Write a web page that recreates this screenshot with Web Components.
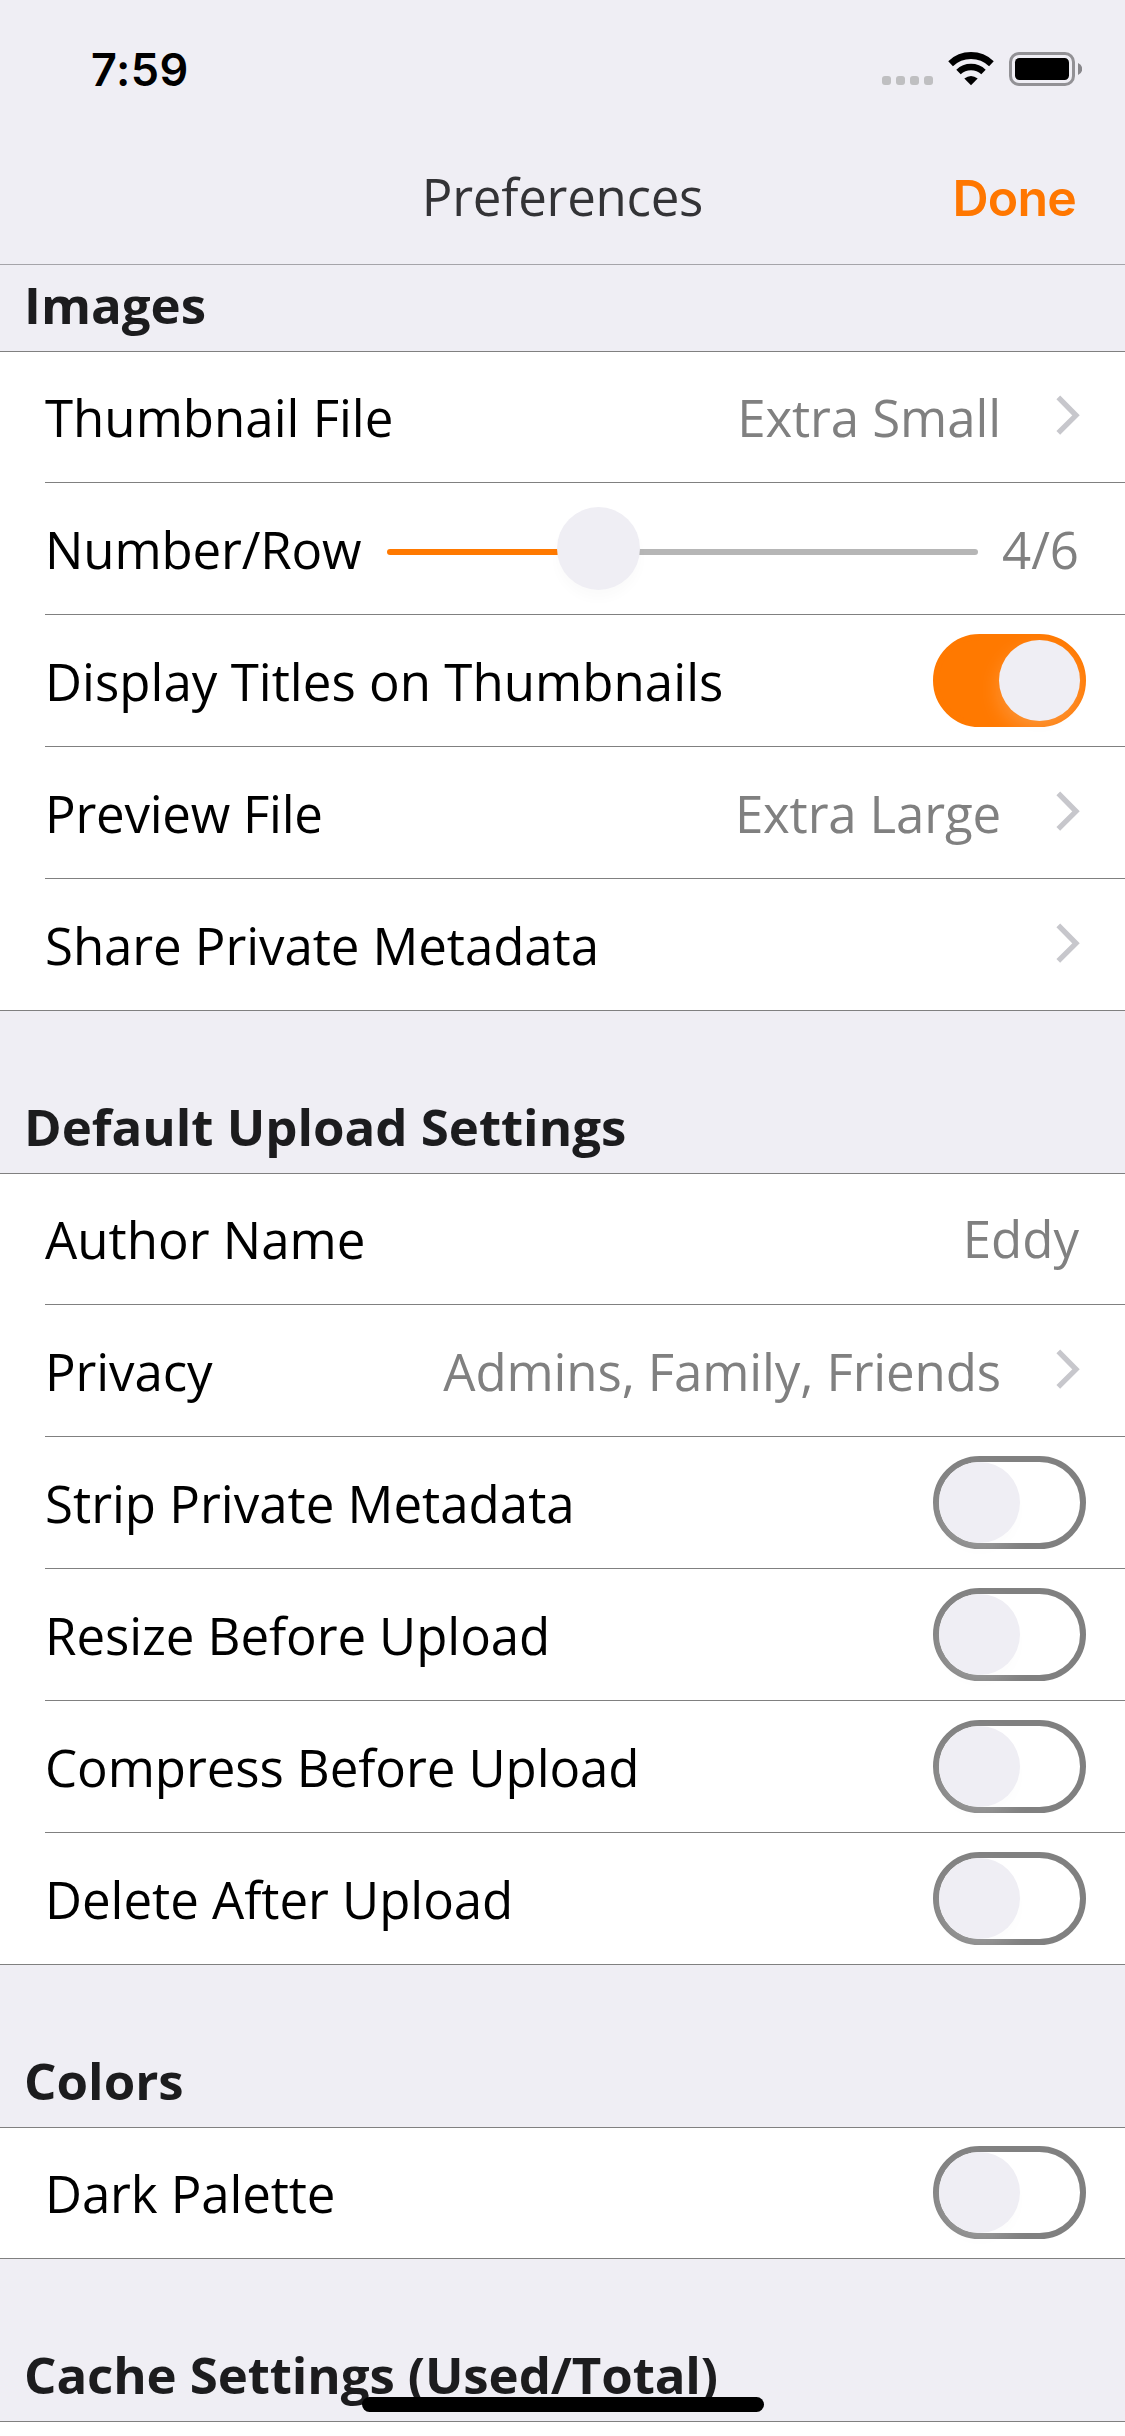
<!DOCTYPE html>
<html lang="en">
<head>
<meta charset="utf-8">
<title>Preferences</title>
<style>
  html, body { margin: 0; padding: 0; }
  body {
    width: 1125px; height: 2436px; overflow: hidden;
    background: #efeef4; color: #000;
    font-family: "Open Sans", "Noto Sans", sans-serif;
    font-size: 51px; line-height: 70px;
  }
</style>
</head>
<body>
<prefs-screen>
  <status-bar slot="top">7:59</status-bar>
  <nav-bar slot="top">Preferences<span slot="action">Done</span></nav-bar>

  <settings-section heading="Images" compact>
    <settings-row label="Thumbnail File" first><span style="letter-spacing:-.1px">Extra Small</span><chevron-icon slot="accessory"></chevron-icon></settings-row>
    <settings-row label="Number/Row" style="--tracking:-.15px"><range-slider slot="control"></range-slider><span>4/6</span></settings-row>
    <settings-row label="Display Titles on Thumbnails" style="--tracking:.03px"><toggle-switch slot="accessory" on></toggle-switch></settings-row>
    <settings-row label="Preview File" style="--tracking:-.24px"><span style="letter-spacing:-.15px">Extra Large</span><chevron-icon slot="accessory"></chevron-icon></settings-row>
    <settings-row label="Share Private Metadata" style="--tracking:-.08px"><chevron-icon slot="accessory"></chevron-icon></settings-row>
  </settings-section>

  <settings-section heading="Default Upload Settings" style="--heading-tracking:-.03px">
    <settings-row label="Author Name" first raised><span>Eddy</span></settings-row>
    <settings-row label="Privacy" style="--tracking:-.1px"><span style="letter-spacing:-.13px">Admins, Family, Friends</span><chevron-icon slot="accessory"></chevron-icon></settings-row>
    <settings-row label="Strip Private Metadata"><toggle-switch slot="accessory"></toggle-switch></settings-row>
    <settings-row label="Resize Before Upload" style="--tracking:-.08px"><toggle-switch slot="accessory"></toggle-switch></settings-row>
    <settings-row label="Compress Before Upload" style="--tracking:-.08px"><toggle-switch slot="accessory"></toggle-switch></settings-row>
    <settings-row label="Delete After Upload" style="--tracking:-.04px"><toggle-switch slot="accessory"></toggle-switch></settings-row>
  </settings-section>

  <settings-section heading="Colors">
    <settings-row label="Dark Palette" first style="--tracking:-.12px"><toggle-switch slot="accessory"></toggle-switch></settings-row>
  </settings-section>

  <settings-section heading="Cache Settings (Used/Total)" style="--heading-tracking:-.11px"></settings-section>
</prefs-screen>

<script>
  const define = (name, html) => {
    const template = document.createElement('template');
    template.innerHTML = html;
    customElements.define(name, class extends HTMLElement {
      constructor() {
        super();
        this.attachShadow({ mode: 'open' }).append(template.content.cloneNode(true));
      }
      connectedCallback() {
        this.shadowRoot.querySelectorAll('[data-text]').forEach(node => {
          node.textContent = this.getAttribute(node.dataset.text) || '';
        });
      }
    });
  };

  define('prefs-screen', `
    <style>
      :host { display: flex; flex-direction: column; position: relative; height: 2436px; overflow: hidden; }
      header { flex: none; border-bottom: 1px solid #a5a4a9; }
      main { flex: 1; display: flex; flex-direction: column; min-height: 0; }
      .home { position: absolute; left: 362px; top: 2397px; width: 402px; height: 15px; border-radius: 8px; background: #000; }
    </style>
    <header><slot name="top"></slot></header>
    <main><slot></slot></main>
    <div class="home"></div>`);

  define('status-bar', `
    <style>
      :host { display: flex; justify-content: space-between; height: 132px; box-sizing: border-box; padding: 41px 43px 0 91px;
        font: 600 45px/58px Inter, "Liberation Sans", sans-serif; }
      .time { letter-spacing: .5px; }
      svg { display: block; margin-top: 9px; }
    </style>
    <span class="time"><slot></slot></span>
    <svg width="201" height="38" viewBox="881 50 201 38">
      <g fill="#bfbfc1">
        <rect x="882" y="76" width="9" height="9" rx="3"/><rect x="896" y="76" width="9" height="9" rx="3"/>
        <rect x="910" y="76" width="9" height="9" rx="3"/><rect x="924" y="76" width="9" height="9" rx="3"/>
      </g>
      <path d="M950.6 63.700 A29.500 29.500 0 0 1 991.4 63.700" fill="none" stroke="#000" stroke-width="6.8"/>
      <path d="M958.500 72 A18.200 18.200 0 0 1 983.500 72" fill="none" stroke="#000" stroke-width="6.4"/>
      <path d="M964.300 78.500 Q971 73.500 977.700 78.500 L971 85.200 Z" fill="#000"/>
      <rect x="1010.500" y="53.500" width="63" height="31" rx="8.500" fill="none" stroke="#929195" stroke-width="3"/>
      <rect x="1015" y="58" width="54" height="22" rx="4.500" fill="#000"/>
      <path d="M1078 63 Q1082.200 65 1082.200 69 Q1082.200 73 1078 75 Z" fill="#88878b"/>
    </svg>`);

  define('nav-bar', `
    <style>
      :host { display: grid; grid-template-columns: 1fr auto 1fr; align-items: start; height: 132px; box-sizing: border-box;
        padding: 29px 49px 0; color: #333336; }
      .action { grid-column: 3; justify-self: end; font: 600 50px/74px Inter, "Liberation Sans", sans-serif; color: #ff7700; letter-spacing: -0.8px; }
      .title { grid-column: 2; letter-spacing: -.25px; }
    </style>
    <span class="title"><slot></slot></span>
    <span class="action"><slot name="action"></slot></span>`);

  define('settings-section', `
    <style>
      :host { display: block; flex: none; }
      h2 { display: flex; align-items: flex-end; box-sizing: border-box; height: 162px; margin: 0; padding: 0 24px 12px;
        font-size: 51px; line-height: 70px; font-weight: 700; color: #1c1c1e; letter-spacing: var(--heading-tracking, 0px); }
      :host([compact]) h2 { height: 86px; }
      .rows { min-height: 14px; border-top: 1px solid #808080; background: #fff; }
    </style>
    <h2 data-text="heading"></h2>
    <div class="rows"><slot></slot></div>`);

  define('settings-row', `
    <style>
      :host { display: block; box-sizing: border-box; height: 132px; padding-left: 45px; }
      :host([first]) { height: 131px; }
      :host(:last-child) { padding-left: 0; }
      :host(:last-child) .line { padding-left: 45px; }
      .line { display: flex; align-items: flex-end; box-sizing: border-box; height: 100%; padding-right: 45px; border-bottom: 1px solid #808080; }
      .label, .value { white-space: nowrap; padding-bottom: 30px; }
      .label { letter-spacing: var(--tracking, 0px); }
      .value { margin-left: auto; padding-right: 1px; color: #808080; }
      :host([raised]) .value { padding-bottom: 31px; }
    </style>
    <div class="line">
      <span class="label" data-text="label"></span>
      <slot name="control"></slot>
      <span class="value"><slot></slot></span>
      <slot name="accessory"></slot>
    </div>`);

  define('chevron-icon', `
    <style>
      :host { display: block; width: 24px; height: 40px; margin: 0 0 47px 54px; }
      svg { display: block; }
    </style>
    <svg width="24" height="40" viewBox="0 0 24 40"><path d="M2.300 2.300 L20 20.300 L2.300 37.800" fill="none" stroke="#c7c7cc" stroke-width="5.300"/></svg>`);

  define('toggle-switch', `
    <style>
      :host { display: flex; flex: none; box-sizing: border-box; width: 153px; height: 93px; margin: 0 -6px 19px 0;
        border: 6px solid #808080; border-radius: 46.500px; }
      i { display: block; width: 81px; height: 81px; border-radius: 50%; background: #efeef4; box-shadow: 0 9px 20px rgba(255,255,255,.22), 0 9px 12px rgba(0,0,0,.012); }
      :host([on]) { justify-content: flex-end; background: #ff7900; border-color: #ff7900; }
    </style>
    <i></i>`);

  define('range-slider', `
    <style>
      :host { display: flex; align-items: flex-end; position: relative; width: 591px; height: 83px; margin: 0 0 24px 26px; }
      .track { width: 100%; height: 6px; margin-bottom: 35px; border-radius: 3px; background: linear-gradient(90deg, #ff7900 211px, #b6b6b6 211px); }
      .thumb { position: absolute; left: 170px; top: 0; width: 83px; height: 83px; border-radius: 50%; background: #efeef4; box-shadow: 0 9px 12px rgba(0,0,0,.018); }
    </style>
    <div class="track"></div><div class="thumb"></div>`);
</script>
</body>
</html>
